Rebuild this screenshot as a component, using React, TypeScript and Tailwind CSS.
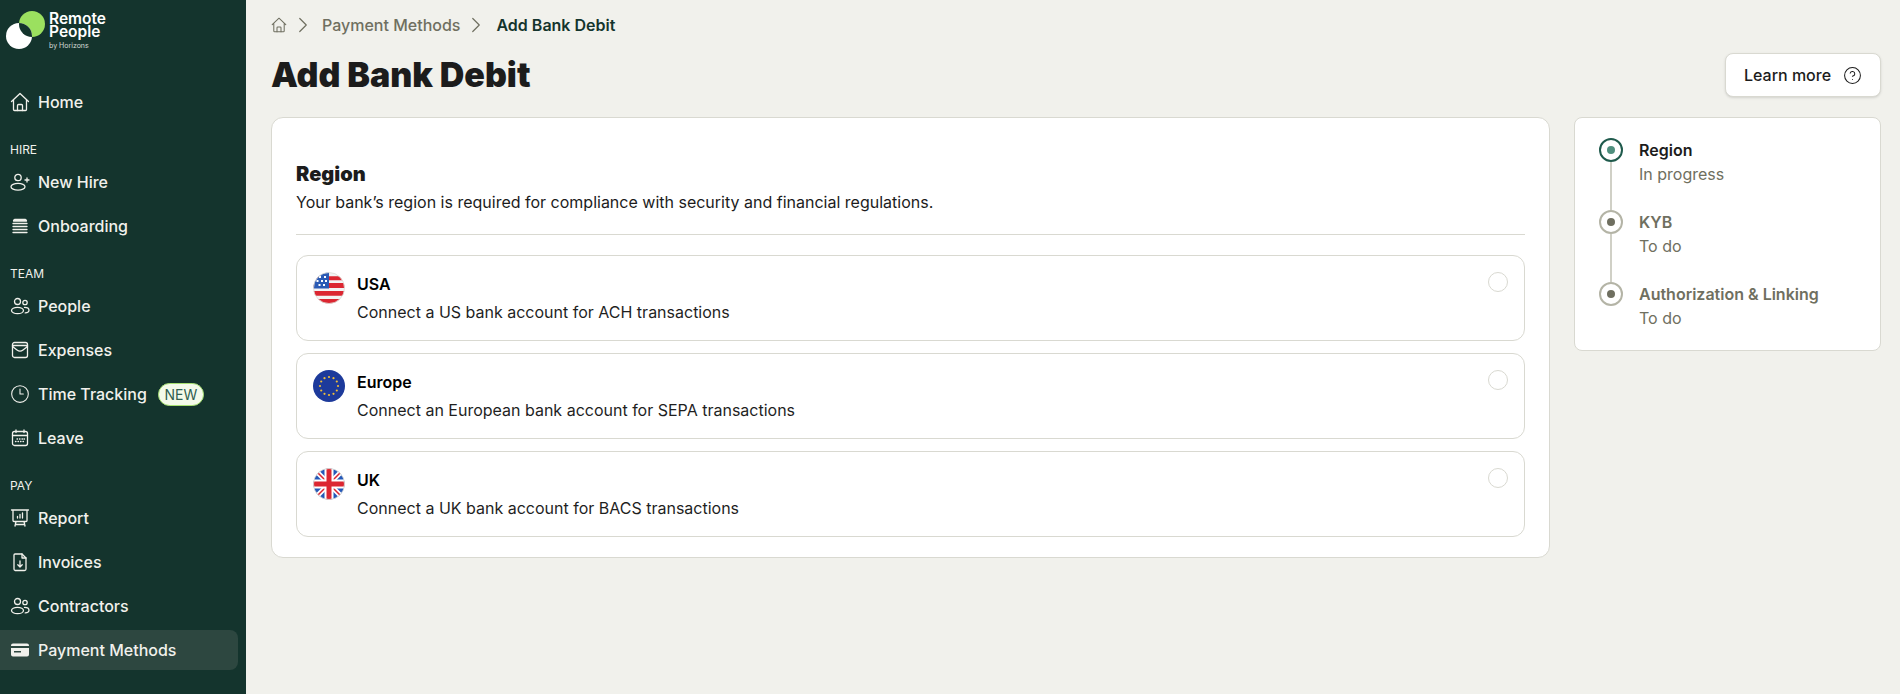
import React from 'react'
import { ChevronRight, CircleHelp, Clock3 } from 'lucide-react'

const iconProps = {
  width: 20,
  height: 20,
  viewBox: '0 0 20 20',
  fill: 'none',
  stroke: 'currentColor',
  strokeWidth: 1.3,
  strokeLinecap: 'round' as const,
  strokeLinejoin: 'round' as const,
}

const HomeIcon = ({ size = 20 }: { size?: number }) => (
  <svg {...iconProps} width={size} height={size}>
    <path d="M1.500 9.500 10 1.500l8.500 8M3.500 7.800v9.700a1 1 0 0 0 1 1h11a1 1 0 0 0 1-1V7.800" />
    <path d="M7.500 18.500v-5a1 1 0 0 1 1-1h3a1 1 0 0 1 1 1v5" />
  </svg>
)

const NewHireIcon = () => (
  <svg {...iconProps}>
    <circle cx="8" cy="5.500" r="3.200" />
    <ellipse cx="8" cy="14.800" rx="7" ry="3.400" />
    <path d="M15 8h4M17 6v4" />
  </svg>
)

const OnboardingIcon = () => (
  <svg {...iconProps}>
    <path d="M4.500 3.500h11a1.500 1.500 0 0 1 1 1.500h-13a1.500 1.500 0 0 1 1-1.500ZM3 7.500h14M3 10.500h14M3 13.500h14M3 16.500h14" />
  </svg>
)

const PeopleIcon = () => (
  <svg {...iconProps}>
    <circle cx="7.500" cy="5.500" r="3" />
    <circle cx="15" cy="6.500" r="2.200" />
    <ellipse cx="7.500" cy="14.500" rx="6" ry="3.200" />
    <path d="M14.500 11.400c2.500 0 4.500 1.200 4.500 2.800 0 1.400-1.600 2.500-3.800 2.700" />
  </svg>
)

const ExpensesIcon = () => (
  <svg {...iconProps}>
    <rect x="2.500" y="2.500" width="15" height="15" rx="2" />
    <path d="M2.500 5.500h15M2.500 6.500 7 10c2 1.500 4 1.500 6 0l4.500-3.500" />
  </svg>
)

const LeaveIcon = () => (
  <svg {...iconProps}>
    <rect x="2.500" y="3.500" width="15" height="14" rx="2" />
    <path d="M2.500 7.500h15M6 2v2.500M14 2v2.500" />
    <path d="M7 11h.5M9.500 11h.5M12 11h.5M14 11h.5M5.500 13.500h.5M8 13.500h.5M10.500 13.500h.5M13 13.500h.5" />
  </svg>
)

const ReportIcon = () => (
  <svg {...iconProps}>
    <path d="M1.500 2h17M3 2v10.500a1 1 0 0 0 1 1h12a1 1 0 0 0 1-1V2M6 13.500 5 18M14 13.500l1 4.500M5.500 16.500h9" />
    <path d="M7.500 10V8.500M10 10V6.500M12.500 10V5" />
  </svg>
)

const InvoicesIcon = () => (
  <svg {...iconProps}>
    <path d="M5 2h7l4 4v11a1.500 1.500 0 0 1-1.500 1.500h-9.500A1.500 1.500 0 0 1 4 17V3a1 1 0 0 1 1-1Z" />
    <path d="M12 2v4h4M10 9v6M7.800 12.800 10 15l2.200-2.200" />
  </svg>
)

const PaymentIcon = () => (
  <svg width="20" height="20" viewBox="0 0 20 20">
    <path fill="currentColor" d="M3 3.500h14A2 2 0 0 1 19 5.500V6H1v-.5a2 2 0 0 1 2-2ZM1 8h18v6.500a2 2 0 0 1-2 2H3a2 2 0 0 1-2-2Z" />
    <path fill="#2d4740" d="M4 11h7v1.500H4z" />
  </svg>
)

const Logo = () => (
  <div className="flex items-start h-[50px] pl-[6px] pt-[11px]">
    <svg width="40" height="40" viewBox="0 0 40 40" className="shrink-0">
      <defs>
        <clipPath id="logo-lens"><circle cx="26" cy="13" r="13" /></clipPath>
      </defs>
      <circle cx="26" cy="13" r="13" fill="#9be05f" />
      <circle cx="13" cy="25" r="13" fill="#ffffff" />
      <circle cx="13" cy="25" r="13" fill="#14342d" clipPath="url(#logo-lens)" />
    </svg>
    <div className="ml-[3px] mt-[1px] text-white">
      <div className="text-[15.500px] leading-[13px] font-semibold">
        Remote
        <br />
        People
      </div>
      <div className="text-[7px] leading-[9px] mt-[3px] text-[#d5dcd8]">by Horizons</div>
    </div>
  </div>
)

const NavItem = ({ icon, label, active, badge }: { icon: React.ReactNode; label: string; active?: boolean; badge?: boolean }) => (
  <div className={`flex items-center h-10 w-[238px] rounded-r-lg pl-[10px] ${active ? 'bg-[#2d4740]' : ''}`}>
    <span className="w-5 h-5 shrink-0 text-[#f1f1ec]">{icon}</span>
    <span className="ml-2 text-[16px] font-medium text-[#f1f1ec]">{label}</span>
    {badge && (
      <span className="ml-[11px] h-[23px] w-[46px] flex items-center justify-center rounded-full border border-[#a6e070] bg-[#f4faea] text-[14px] text-[#2f5e50]">
        NEW
      </span>
    )}
  </div>
)

const SectionLabel = ({ children }: { children: React.ReactNode }) => (
  <div className="pl-[10px] text-[12px] leading-4 text-[#f1f1ec] mt-5 mb-1">{children}</div>
)

const UsFlag = () => (
  <svg width="32" height="32" viewBox="0 0 32 32">
    <defs>
      <clipPath id="us-clip"><circle cx="16" cy="16" r="15.500" /></clipPath>
    </defs>
    <g clipPath="url(#us-clip)">
      <rect width="32" height="32" fill="#f3f3f3" />
      <path fill="#dc2631" d="M0 4.300h32v4H0zM0 11h32v5H0zM0 19h32v4.700H0zM0 27h32v5H0z" />
      <rect width="16" height="16.500" fill="#2b5bb5" />
      <path fill="#ffffff" d="M6 4h2v2H6zM11 4h2v2h-2zM3.500 8h2v2h-2zM8 8h2v2H8zM12 8h2v2h-2zM5.500 12h2v2h-2zM10 12h2v2h-2z" />
    </g>
    <circle cx="16" cy="16" r="15.500" fill="none" stroke="#dcdcd6" strokeWidth="0.800" />
  </svg>
)

const stars = Array.from({ length: 12 }, (_, i) => {
  const a = (i * Math.PI) / 6
  return { x: 16 + 9 * Math.sin(a), y: 16 - 9 * Math.cos(a) }
})

const EuFlag = () => (
  <svg width="32" height="32" viewBox="0 0 32 32">
    <circle cx="16" cy="16" r="16" fill="#1d3a9b" />
    {stars.map((s, i) => (
      <circle key={i} cx={s.x} cy={s.y} r="1.100" fill="#eebd3a" />
    ))}
  </svg>
)

const UkFlag = () => (
  <svg width="32" height="32" viewBox="0 0 32 32">
    <defs>
      <clipPath id="uk-clip"><circle cx="16" cy="16" r="15.500" /></clipPath>
    </defs>
    <g clipPath="url(#uk-clip)">
      <rect width="32" height="32" fill="#2458b8" />
      <path stroke="#ffffff" strokeWidth="5" d="M3 3l26 26M29 3 3 29" />
      <path stroke="#dc2631" strokeWidth="1.500" d="M3 3l11 11M18 18l11 11M29 3 18 14M14 18 3 29" />
      <path fill="#ffffff" d="M11.500 0h9v11.500H32v9H20.500V32h-9V20.500H0v-9h11.500z" />
      <path fill="#dc2631" d="M13.500 0h5v13.500H32v5H18.500V32h-5V18.500H0v-5h13.500z" />
    </g>
    <circle cx="16" cy="16" r="15.500" fill="none" stroke="#dcdcd6" strokeWidth="0.800" />
  </svg>
)

const RegionOption = ({ flag, title, text }: { flag: React.ReactNode; title: string; text: string }) => (
  <div className="relative flex h-[86px] gap-3 rounded-xl border border-[#d9d9d1] bg-white px-4 pt-4">
    <div className="shrink-0 w-8 h-8">{flag}</div>
    <div>
      <div className="text-[16px] leading-6 font-semibold text-black">{title}</div>
      <div className="mt-1 text-[16px] leading-6 text-[#1f1f1f]">{text}</div>
    </div>
    <span className="absolute right-[16px] top-[16px] h-5 w-5 rounded-full border border-[#d9d9d1] bg-white" />
  </div>
)

const Step = ({ title, sub, active, last }: { title: string; sub: string; active?: boolean; last?: boolean }) => (
  <div className={`flex gap-[16px] ${last ? 'h-12' : 'h-[72px]'}`}>
    <div className="flex flex-col items-center w-6 shrink-0">
      <span className={`flex items-center justify-center h-6 w-6 shrink-0 rounded-full border-2 ${active ? 'border-[#1f5a4c]' : 'border-[#b4b4a6]'}`}>
        <span className={`h-2 w-2 rounded-full ${active ? 'bg-[#4f8f7e]' : 'bg-[#6f6f60]'}`} />
      </span>
      {!last && <span className="w-[2px] flex-1 bg-[#d0d0c6]" />}
    </div>
    <div>
      <div className={`text-[16px] leading-6 font-semibold ${active ? 'text-[#1c1c1c]' : 'text-[#6f6f60]'}`}>{title}</div>
      <div className="text-[16px] leading-6 text-[#6f6f60]">{sub}</div>
    </div>
  </div>
)

const App = () => {
  return (
    <div className="flex h-screen w-full overflow-hidden bg-[#f1f1ec] font-['Inter',sans-serif]">
      <aside className="w-[246px] shrink-0 bg-[#14342d]">
        <Logo />
        <nav className="mt-[32px] flex flex-col">
          <NavItem icon={<HomeIcon />} label="Home" />
          <SectionLabel>HIRE</SectionLabel>
          <div className="flex flex-col gap-1">
            <NavItem icon={<NewHireIcon />} label="New Hire" />
            <NavItem icon={<OnboardingIcon />} label="Onboarding" />
          </div>
          <SectionLabel>TEAM</SectionLabel>
          <div className="flex flex-col gap-1">
            <NavItem icon={<PeopleIcon />} label="People" />
            <NavItem icon={<ExpensesIcon />} label="Expenses" />
            <NavItem icon={<Clock3 size={20} strokeWidth={1.3} />} label="Time Tracking" badge />
            <NavItem icon={<LeaveIcon />} label="Leave" />
          </div>
          <SectionLabel>PAY</SectionLabel>
          <div className="flex flex-col gap-1">
            <NavItem icon={<ReportIcon />} label="Report" />
            <NavItem icon={<InvoicesIcon />} label="Invoices" />
            <NavItem icon={<PeopleIcon />} label="Contractors" />
            <NavItem icon={<PaymentIcon />} label="Payment Methods" active />
          </div>
        </nav>
      </aside>

      <main className="flex-1 min-w-0 pl-[25px] pr-[19px] pt-[13px]">
        <div className="flex items-center h-6 text-[16px] font-medium text-[#6f6f60]">
          <HomeIcon size={16} />
          <ChevronRight size={26} strokeWidth={1.1} className="ml-[3px]" />
          <span className="ml-[6px]">Payment Methods</span>
          <ChevronRight size={26} strokeWidth={1.1} className="ml-[3px]" />
          <span className="ml-[7px] font-semibold text-[#14342d]">Add Bank Debit</span>
        </div>

        <div className="mt-[16px] flex items-center justify-between h-[44px]">
          <h1 className="text-[34px] leading-[44px] font-black text-[#1c1c1c]">Add Bank Debit</h1>
          <button className="flex items-center gap-3 h-[44px] w-[156px] justify-center rounded-lg border border-[#d9d9d1] bg-white text-[16px] font-medium text-[#1c1c1c] shadow-sm">
            Learn more
            <CircleHelp size={19} strokeWidth={1.3} />
          </button>
        </div>

        <div className="mt-[20px] flex items-start gap-[24px]">
          <section className="w-[1279px] shrink-0 rounded-xl border border-[#d9d9d1] bg-white px-6 pt-[42px] pb-5">
            <h2 className="text-[20px] leading-7 font-black text-[#1c1c1c]">Region</h2>
            <p className="mt-[2px] text-[16px] leading-6 text-[#1c1c1c]">
              Your bank’s region is required for compliance with security and financial regulations.
            </p>
            <div className="mt-[20px] mb-[20px] h-px bg-[#d9d9d1]" />
            <div className="flex flex-col gap-3">
              <RegionOption flag={<UsFlag />} title="USA" text="Connect a US bank account for ACH transactions" />
              <RegionOption flag={<EuFlag />} title="Europe" text="Connect an European bank account for SEPA transactions" />
              <RegionOption flag={<UkFlag />} title="UK" text="Connect a UK bank account for BACS transactions" />
            </div>
          </section>

          <aside className="flex-1 rounded-lg border border-[#d9d9d1] bg-white pl-6 pt-5 pb-5">
            <Step title="Region" sub="In progress" active />
            <Step title="KYB" sub="To do" />
            <Step title="Authorization & Linking" sub="To do" last />
          </aside>
        </div>
      </main>
    </div>
  )
}

export default App
